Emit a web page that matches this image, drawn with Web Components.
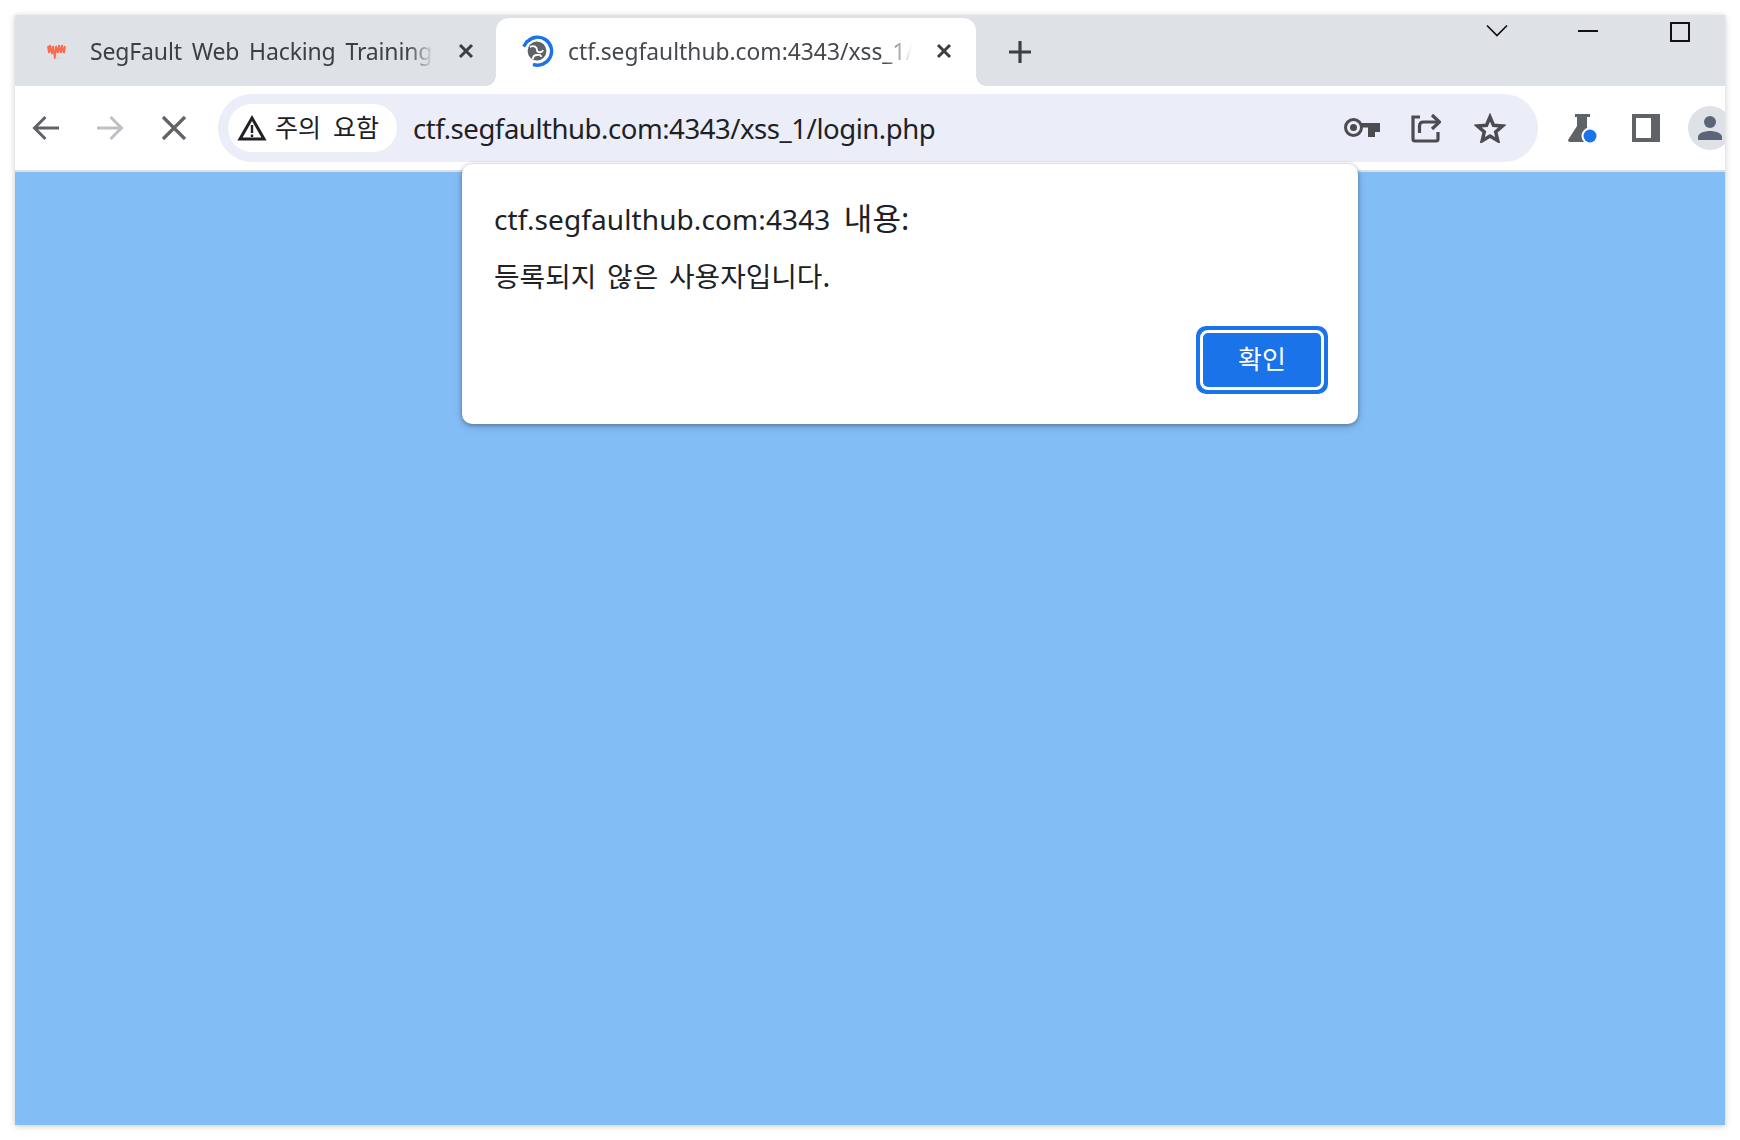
<!DOCTYPE html>
<html lang="ko">
<head>
<meta charset="utf-8">
<title>ctf.segfaulthub.com</title>
<style>
    html, body { margin: 0; height: 100%; background: #fff; }
    body { font-family: "Noto Sans", "Noto Sans CJK KR", sans-serif; }
</style>
</head>
<body>
<chrome-window>
    <tab-strip slot="tabs">
        <browser-tab>
            <svg slot="icon" width="22" height="22" viewBox="0 0 22 22">
                <path d="M2 6l1 7 1-8 2 9 1-8 2 13 1-13 2 7 1-8 2 8 1-8 2 8 1-7" fill="none" stroke="#fa6a50" stroke-width="1.8"/>
                <path d="M9 18h7" stroke="#bfe0d8" stroke-width="1.200"/>
            </svg>
            SegFault Web Hacking Training
        </browser-tab>
        <browser-tab active>
            <svg slot="icon" width="34" height="34" viewBox="0 0 34 34">
                <path d="M7.4 7.6A14 14 0 1 1 13 30.400" fill="none" stroke="#1a73e8" stroke-width="3.400"/>
                <path d="M3.600 12.600l4-6" stroke="#1a73e8" stroke-width="3.400"/>
                <circle cx="17" cy="17" r="9.400" fill="#5f6368"/>
                <path d="M10 13c4-2 7 0 7 3s5 3 6 0M13 25c0-3 2-4 4-4s4-1 4 2" fill="none" stroke="#fff" stroke-width="1.800"/>
            </svg>
            ctf.segfaulthub.com:4343/xss_1/login.php
        </browser-tab>
        <new-tab-button></new-tab-button>
        <window-controls></window-controls>
    </tab-strip>
    <nav-toolbar slot="toolbar"></nav-toolbar>
    <js-dialog ok="확인">
        <span slot="origin">ctf.segfaulthub.com:4343 <span style="font-size:31px">내용:</span></span>
        등록되지 않은 사용자입니다.
    </js-dialog>
</chrome-window>

<script>
class ChromeWindow extends HTMLElement {
    constructor() {
        super();
        this.attachShadow({ mode: 'open' });
        this.shadowRoot.innerHTML = `
        <style>
            :host {
                display: flex;
                flex-direction: column;
                position: relative;
                box-sizing: border-box;
                width: 1710px;
                height: 1110px;
                margin: 15px;
                box-shadow: 0 1px 6px rgba(0, 0, 0, 0.22);
            }
            main {
                flex: 1;
                background: #83bdf6;
                border-top: 2px solid #dcdfe3;
            }
        </style>
        <slot name="tabs"></slot>
        <slot name="toolbar"></slot>
        <main></main>
        <slot></slot>
        `;
    }
}

class TabStrip extends HTMLElement {
    constructor() {
        super();
        this.attachShadow({ mode: 'open' });
        this.shadowRoot.innerHTML = `
        <style>
            :host {
                display: flex;
                align-items: flex-end;
                height: 71px;
                background: #dee1e6;
                overflow: hidden;
            }
        </style>
        <slot></slot>
        `;
    }
}

class BrowserTab extends HTMLElement {
    constructor() {
        super();
        this.attachShadow({ mode: 'open' });
        this.shadowRoot.innerHTML = `
        <style>
            :host {
                display: flex;
                align-items: center;
                box-sizing: border-box;
                width: 481px;
                height: 68px;
                padding: 0 22px 2px 31px;
                color: #3c4043;
                font-size: 23px;
                word-spacing: 4px;
                letter-spacing: -0.15px;
                position: relative;
            }
            :host([active]) {
                width: 480px;
                padding: 0 24px 2px 24px;
                background: #fff;
                border-radius: 13px 13px 0 0;
                color: #45494d;
                font-size: 22.8px;
                word-spacing: 0;
                letter-spacing: 0;
            }
            :host([active])::before,
            :host([active])::after {
                content: "";
                position: absolute;
                bottom: 0;
                width: 10px;
                height: 10px;
            }
            :host([active])::before {
                left: -10px;
                background: radial-gradient(circle at 0 0, transparent 9.5px, #fff 10px);
            }
            :host([active])::after {
                right: -10px;
                background: radial-gradient(circle at 100% 0, transparent 9.5px, #fff 10px);
            }
            .icon {
                display: flex;
                align-items: center;
                justify-content: center;
                flex: none;
                width: 22px;
                margin-right: 22px;
            }
            :host([active]) .icon { width: 34px; margin-right: 14px; }
            .title {
                flex: 1;
                min-width: 0;
                overflow: hidden;
                white-space: nowrap;
                -webkit-mask-image: linear-gradient(to right, #000 92%, transparent 100%);
                mask-image: linear-gradient(to right, #000 92%, transparent 100%);
            }
            svg.close { flex: none; margin-left: 24px; }
        </style>
        <span class="icon"><slot name="icon"></slot></span>
        <span class="title"><slot></slot></span>
        <svg class="close" width="16" height="16" viewBox="0 0 16 16">
            <path d="M2 2l12 12M14 2L2 14" stroke="#3c4043" stroke-width="3"/>
        </svg>
        `;
    }
}

class NewTabButton extends HTMLElement {
    constructor() {
        super();
        this.attachShadow({ mode: 'open' });
        this.shadowRoot.innerHTML = `
        <style>
            :host {
                display: flex;
                align-items: center;
                justify-content: center;
                width: 88px;
                height: 68px;
            }
        </style>
        <svg width="24" height="24" viewBox="0 0 24 24">
            <path d="M12 1v22M1 12h22" stroke="#3c4043" stroke-width="3.200"/>
        </svg>
        `;
    }
}

class WindowControls extends HTMLElement {
    constructor() {
        super();
        this.attachShadow({ mode: 'open' });
        this.shadowRoot.innerHTML = `
        <style>
            :host {
                flex: 1;
                align-self: flex-start;
                display: flex;
                justify-content: flex-end;
                height: 40px;
                padding-top: 7px;
                box-sizing: border-box;
            }
            svg { display: block; }
            .chev { margin-right: 69px; }
            .min { margin-right: 71px; }
            .max { margin-right: 35px; }
        </style>
        <svg class="chev" width="22" height="18" viewBox="0 0 22 18"><path d="M1 3.500l10 10 10-10" fill="none" stroke="#111" stroke-width="1.700"/></svg>
        <svg class="min" width="22" height="18" viewBox="0 0 22 18"><path d="M1 9h20" stroke="#111" stroke-width="2"/></svg>
        <svg class="max" width="20" height="20" viewBox="0 0 20 20"><rect x="1" y="1" width="18" height="18" fill="none" stroke="#111" stroke-width="2"/></svg>
        `;
    }
}

class NavToolbar extends HTMLElement {
    constructor() {
        super();
        this.attachShadow({ mode: 'open' });
        this.shadowRoot.innerHTML = `
        <style>
            :host {
                display: flex;
                align-items: center;
                box-sizing: border-box;
                height: 84px;
                padding-left: 15px;
                background: #fff;
                overflow: hidden;
            }
            .btn {
                display: flex;
                align-items: center;
                justify-content: center;
                flex: none;
                width: 32px;
                margin-right: 32px;
            }
            omni-box { margin-left: -4px; }
            .right {
                display: flex;
                align-items: center;
                margin-left: 30px;
            }
            .flask { overflow: visible; margin-right: 34px; }
            .side { margin-right: 28px; }
            .avatar {
                flex: none;
                width: 44px;
                height: 44px;
                border-radius: 50%;
                background: #dee1e6;
                display: flex;
                align-items: center;
                justify-content: center;
            }
        </style>
        <span class="btn"><svg width="30" height="28" viewBox="0 0 30 28"><path d="M28 14H4M14.500 3L3.500 14l11 11" fill="none" stroke="#5f6368" stroke-width="3"/></svg></span>
        <span class="btn"><svg width="30" height="28" viewBox="0 0 30 28"><path d="M2 14h24M15.500 3l11 11-11 11" fill="none" stroke="#bdc1c6" stroke-width="3"/></svg></span>
        <span class="btn"><svg width="26" height="26" viewBox="0 0 26 26"><path d="M2 2l22 22M24 2L2 24" stroke="#5f6368" stroke-width="3.200"/></svg></span>
        <omni-box url="ctf.segfaulthub.com:4343/xss_1/login.php" chip="주의 요함"></omni-box>
        <div class="right">
            <svg class="flask" width="30" height="28" viewBox="0 0 30 28">
                <path d="M7 0h15v3h-3v10l8 15H2q-2 0-2-2l9-14V3H7z" fill="#5f6368"/>
                <circle cx="22" cy="22" r="8.500" fill="#fff"/>
                <circle cx="22" cy="22" r="6.500" fill="#1a73e8"/>
            </svg>
            <svg class="side" width="28" height="28" viewBox="0 0 28 28">
                <path fill-rule="evenodd" d="M0 0h28v28H0zM4 4v20h15V4z" fill="#5f6368"/>
            </svg>
            <span class="avatar">
                <svg width="24" height="24" viewBox="0 0 24 24">
                    <circle cx="12" cy="6" r="6" fill="#5b6478"/>
                    <path d="M0 24v-3c0-4 7-6 12-6s12 2 12 6v3z" fill="#5b6478"/>
                </svg>
            </span>
        </div>
        `;
    }
}

class OmniBox extends HTMLElement {
    constructor() {
        super();
        this.attachShadow({ mode: 'open' });
        this.shadowRoot.innerHTML = `
        <style>
            :host {
                display: flex;
                align-items: center;
                flex: none;
                box-sizing: border-box;
                width: 1320px;
                height: 68px;
                padding: 0 32px 0 10px;
                border-radius: 34px;
                background: #ebeef8;
            }
            .chip {
                display: flex;
                align-items: center;
                gap: 8px;
                box-sizing: border-box;
                height: 48px;
                padding: 0 18px 0 9px;
                border-radius: 24px;
                background: #fff;
                color: #202124;
                font-size: 25px;
                font-family: "Noto Sans CJK KR", sans-serif;
                white-space: nowrap;
                word-spacing: 5px;
            }
            #chip { padding-bottom: 4px; }
            .url {
                flex: 1;
                margin-left: 16px;
                color: #202124;
                font-size: 27.5px;
                letter-spacing: -0.45px;
                white-space: nowrap;
            }
            .actions { display: flex; align-items: center; }
            .key { margin-right: 31px; }
            .share { margin-right: 33px; }
            svg { display: block; }
        </style>
        <span class="chip">
            <svg width="30" height="28" viewBox="0 0 30 28">
                <path d="M15 4L27 25H3z" fill="none" stroke="#202124" stroke-width="3"/>
                <path d="M15 11v8M15 20.500v2.500" stroke="#202124" stroke-width="2.400"/>
            </svg>
            <span id="chip"></span>
        </span>
        <span class="url" id="url"></span>
        <span class="actions">
            <svg class="key" width="36" height="20" viewBox="0 0 36 20">
                <circle cx="9.500" cy="9.500" r="8" fill="none" stroke="#4a4c50" stroke-width="3"/>
                <circle cx="9.500" cy="9.500" r="3.500" fill="#4a4c50"/>
                <path d="M16 5h20v9h-5v5h-7V9.500h-8z" fill="#4a4c50"/>
            </svg>
            <svg class="share" width="30" height="30" viewBox="0 0 30 30">
                <path d="M9 4H2v22q0 2 2 2h21q2 0 2-2v-7" fill="none" stroke="#4a4c50" stroke-width="3.200"/>
                <path d="M8.500 20v-7q0-4 4-4h14" fill="none" stroke="#4a4c50" stroke-width="3.200"/>
                <path d="M21 2l7.500 7-7.500 7" fill="none" stroke="#4a4c50" stroke-width="3.200"/>
            </svg>
            <svg width="32" height="30" viewBox="0 0 32 30">
                <path d="M16 4l3.500 8.300 9 .7-6.800 5.900 2.100 8.800-7.800-4.700-7.800 4.700 2.100-8.800L3.500 13l9-.7z" fill="none" stroke="#4a4c50" stroke-width="3.500"/>
            </svg>
        </span>
        `;
    }
    connectedCallback() {
        this.shadowRoot.getElementById('url').textContent = this.getAttribute('url');
        this.shadowRoot.getElementById('chip').textContent = this.getAttribute('chip');
    }
}

class JsDialog extends HTMLElement {
    constructor() {
        super();
        this.attachShadow({ mode: 'open' });
        this.shadowRoot.innerHTML = `
        <style>
            :host {
                position: absolute;
                top: 149px;
                left: 447px;
                display: flex;
                flex-direction: column;
                box-sizing: border-box;
                width: 896px;
                height: 260px;
                padding: 34px 30px 30px 32px;
                border-radius: 10px;
                background: #fff;
                box-shadow: 0 1px 4px rgba(0, 0, 0, 0.32), 0 3px 10px rgba(0, 0, 0, 0.14);
                color: #202124;
                font-family: "Noto Sans", "Noto Sans CJK KR", sans-serif;
            }
            .origin { font-size: 28px; line-height: 40px; word-spacing: 6px; letter-spacing: 0.1px; }
            .msg {
                font-size: 27.8px;
                line-height: 36px;
                margin-top: 18px;
                font-family: "Noto Sans CJK KR", sans-serif;
                word-spacing: 3px;
            }
            .actions { margin-top: auto; display: flex; justify-content: flex-end; }
            .ring {
                padding: 4px;
                border-radius: 10px;
                background: #1a73e8;
                display: flex;
            }
            button {
                box-sizing: border-box;
                width: 124px;
                height: 60px;
                border: 3px solid #fff;
                border-radius: 8px;
                background: #1a73e8;
                color: #fff;
                font: 26px "Noto Sans CJK KR", sans-serif;
                padding: 0 0 5px;
            }
        </style>
        <div class="origin"><slot name="origin"></slot></div>
        <div class="msg"><slot></slot></div>
        <div class="actions"><span class="ring"><button id="ok"></button></span></div>
        `;
    }
    connectedCallback() {
        this.shadowRoot.getElementById('ok').textContent = this.getAttribute('ok');
    }
}

customElements.define('chrome-window', ChromeWindow);
customElements.define('tab-strip', TabStrip);
customElements.define('browser-tab', BrowserTab);
customElements.define('new-tab-button', NewTabButton);
customElements.define('window-controls', WindowControls);
customElements.define('nav-toolbar', NavToolbar);
customElements.define('omni-box', OmniBox);
customElements.define('js-dialog', JsDialog);
</script>
</body>
</html>
